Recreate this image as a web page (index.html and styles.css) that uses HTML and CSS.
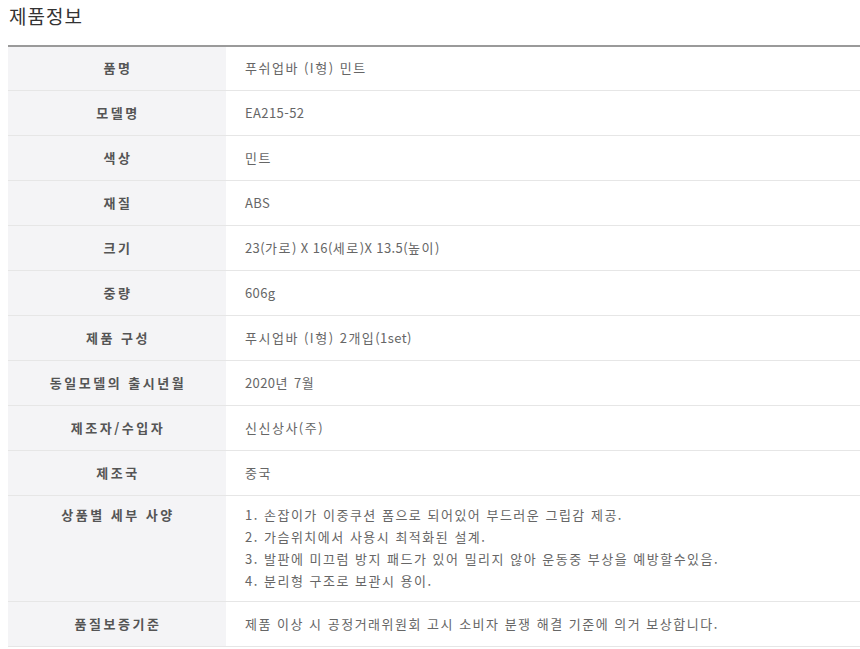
FILE: index.html
```html
<!DOCTYPE html>
<html lang="ko">
<head>
<meta charset="utf-8">
<title>제품정보</title>
<link rel="stylesheet" href="styles.css">
</head>
<body>
<div class="page">
  <h2 class="title">제품정보</h2>
  <table class="spec">
    <tbody>
      <tr><th>품명</th><td>푸쉬업바 (I형) 민트</td></tr>
      <tr><th>모델명</th><td><span class="en">EA215-52</span></td></tr>
      <tr><th>색상</th><td>민트</td></tr>
      <tr><th>재질</th><td><span class="en">ABS</span></td></tr>
      <tr><th>크기</th><td><span class="en">23(</span>가로<span class="en">) X 16(</span>세로<span class="en">)X 13.5(</span>높이<span class="en">)</span></td></tr>
      <tr><th>중량</th><td><span class="en">606g</span></td></tr>
      <tr><th>제품 구성</th><td>푸시업바 (I형) 2개입<span class="en">(1set)</span></td></tr>
      <tr><th>동일모델의 출시년월</th><td><span class="en">2020</span>년 <span class="en">7</span>월</td></tr>
      <tr><th>제조자/수입자</th><td>신신상사(주)</td></tr>
      <tr><th>제조국</th><td>중국</td></tr>
      <tr class="multi"><th>상품별 세부 사양</th><td>1. 손잡이가 이중쿠션 폼으로 되어있어 부드러운 그립감 제공.<br>2. 가슴위치에서 사용시 최적화된 설계.<br>3. 발판에 미끄럼 방지 패드가 있어 밀리지 않아 운동중 부상을 예방할수있음.<br>4. 분리형 구조로 보관시 용이.</td></tr>
      <tr><th>품질보증기준</th><td>제품 이상 시 공정거래위원회 고시 소비자 분쟁 해결 기준에 의거 보상합니다.</td></tr>
    </tbody>
  </table>
</div>
</body>
</html>
```

FILE: styles.css
```css
html, body {
  margin: 0;
  padding: 0;
  background: #ffffff;
}
.page {
  padding: 0 0 0 8px;
  font-family: "Noto Sans CJK KR", "Noto Sans", sans-serif;
}
.title {
  margin: 0;
  padding: 3px 0 0 1px;
  height: 45px;
  box-sizing: border-box;
  font-size: 19px;
  line-height: 26px;
  letter-spacing: 1px;
  font-weight: normal;
  color: #333333;
}
.spec {
  width: 852px;
  border-collapse: collapse;
  border-top: 2px solid #9a9a9a;
  font-size: 13px;
}
.spec th,
.spec td {
  height: 45px;
  box-sizing: border-box;
  padding: 0;
  line-height: 20px;
  border-bottom: 1px solid #e6e6e6;
  vertical-align: middle;
}
.spec tr:first-child th,
.spec tr:first-child td {
  height: 44px;
}
.spec th {
  width: 218px;
  background: #f4f4f6;
  color: #555555;
  font-weight: bold;
  letter-spacing: 2.5px;
  text-indent: 2px;
  text-align: center;
}
.spec td {
  padding-left: 19px;
  color: #666666;
  letter-spacing: 1.5px;
  text-align: left;
}
.spec .en {
  letter-spacing: 0.4px;
}
.spec .multi th,
.spec .multi td {
  vertical-align: top;
  padding-top: 8px;
  padding-bottom: 9px;
  line-height: 22px;
  height: 106px;
}
```
